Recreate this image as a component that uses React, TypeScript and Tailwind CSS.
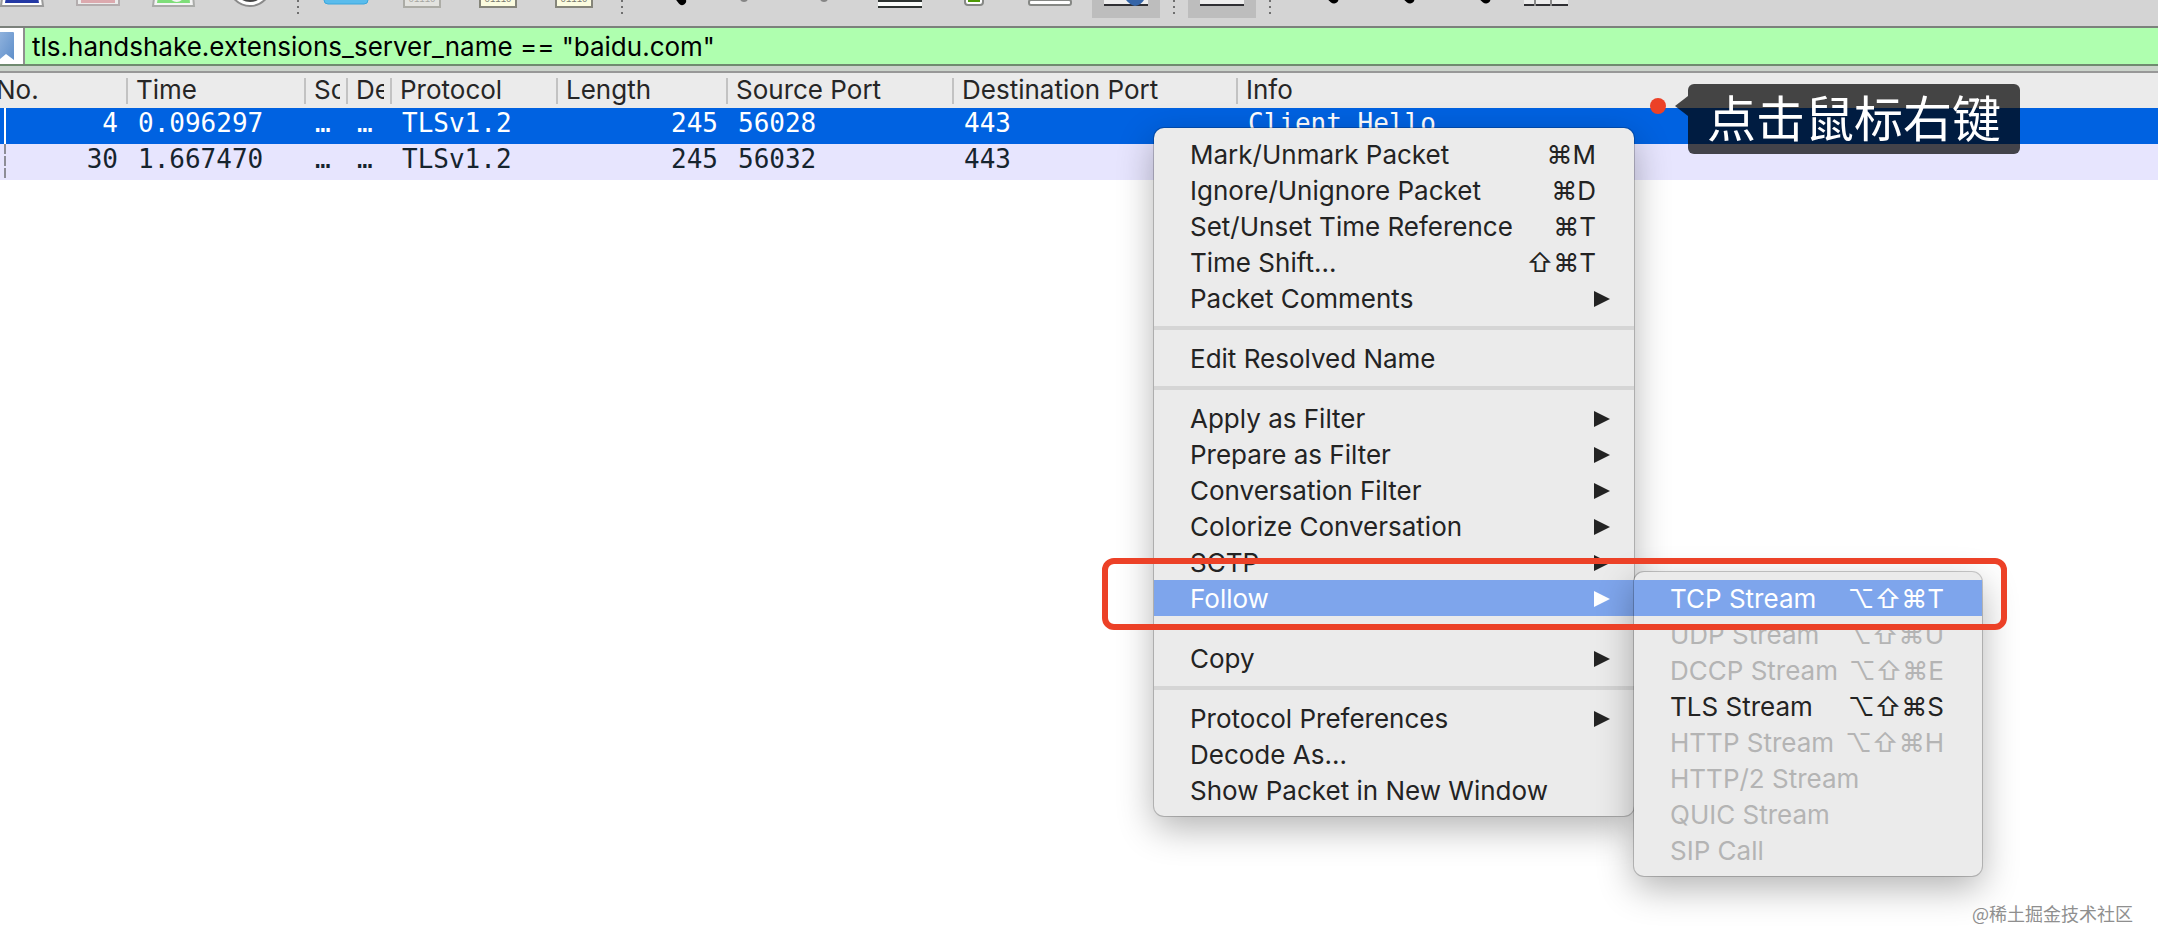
import React from 'react'

type MenuEntry = {
  label: string
  keys?: string
  sub?: boolean
  active?: boolean
  disabled?: boolean
}

const TOOLS = [
  "start", "stop", "restart", "options", "|",
  "open", "save", "close", "reload", "|",
  "find", "back", "forward", "goto", "first", "last", "autoscroll", "|",
  "colorize", "|",
  "zoom-in", "zoom-out", "zoom-reset", "resize",
]

const COLUMNS = [
  { label: "No.",              width: "w-[128px]" },
  { label: "Time",             width: "w-[178px]" },
  { label: "Source",           width: "w-[42px]"  },
  { label: "Destination",      width: "w-[44px]"  },
  { label: "Protocol",         width: "w-[166px]" },
  { label: "Length",           width: "w-[170px]" },
  { label: "Source Port",      width: "w-[226px]" },
  { label: "Destination Port", width: "w-[284px]" },
  { label: "Info",             width: ""          },
]

const PACKETS = [
  { no: 4,  time: "0.096297", protocol: "TLSv1.2", length: 245, srcPort: 56028, dstPort: 443, info: "Client Hello", selected: true  },
  { no: 30, time: "1.667470", protocol: "TLSv1.2", length: 245, srcPort: 56032, dstPort: 443, info: "Client Hello", selected: false },
]

const MENU: MenuEntry[][] = [
  [
    { label: "Mark/Unmark Packet", keys: "⌘M" },
    { label: "Ignore/Unignore Packet", keys: "⌘D" },
    { label: "Set/Unset Time Reference", keys: "⌘T" },
    { label: "Time Shift...", keys: "⇧⌘T" },
    { label: "Packet Comments", sub: true },
  ],
  [{ label: "Edit Resolved Name" }],
  [
    { label: "Apply as Filter", sub: true },
    { label: "Prepare as Filter", sub: true },
    { label: "Conversation Filter", sub: true },
    { label: "Colorize Conversation", sub: true },
    { label: "SCTP", sub: true },
    { label: "Follow", sub: true, active: true },
  ],
  [{ label: "Copy", sub: true }],
  [
    { label: "Protocol Preferences", sub: true },
    { label: "Decode As..." },
    { label: "Show Packet in New Window" },
  ],
]

const FOLLOW: MenuEntry[] = [
  { label: "TCP Stream", keys: "⌥⇧⌘T", active: true },
  { label: "UDP Stream", keys: "⌥⇧⌘U", disabled: true },
  { label: "DCCP Stream", keys: "⌥⇧⌘E", disabled: true },
  { label: "TLS Stream", keys: "⌥⇧⌘S" },
  { label: "HTTP Stream", keys: "⌥⇧⌘H", disabled: true },
  { label: "HTTP/2 Stream", disabled: true },
  { label: "QUIC Stream", disabled: true },
  { label: "SIP Call", disabled: true },
]

function DocIcon({ faded }: { faded?: boolean }) {
  return (
    <g opacity={faded ? 0.5 : 1}>
      <rect x="20" y="-40" width="36" height="47" fill={faded ? "#f2f2ea" : "#fcfcdf"} stroke="#85857a" strokeWidth="2" />
      <text x="38" y="2" textAnchor="middle" fontFamily="Liberation Mono" fontSize="9" fill="#77776f">01110</text>
    </g>
  )
}

function ToolIcon({ name }: { name: string }) {
  switch (name) {
    case "start":
      return <>
        <path d="M20-16 H56 L59 6 H17Z" fill="#fff" stroke="#9a9a9a" strokeWidth="2" />
        <path d="M24-16 H52 L55 3 H21Z" fill="#2439a5" />
      </>
    case "stop":
      return <>
        <rect x="17" y="-30" width="42" height="35" fill="#ececec" stroke="#b3adae" strokeWidth="2" />
        <rect x="21" y="-30" width="34" height="33" fill="#dca9ae" />
      </>
    case "restart":
      return <>
        <path d="M20-16 H56 L58 6 H17Z" fill="#f4f4f4" stroke="#a9aba8" strokeWidth="2" />
        <path d="M24-16 H52 L54 3 H21Z" fill="#7ede79" />
        <path d="M35-3 Q41 3 46-3" fill="none" stroke="#f4f4f4" strokeWidth="4" />
      </>
    case "options":
      return <>
        <circle cx="38" cy="-15" r="21" fill="#fff" stroke="#8a8a8a" strokeWidth="2" />
        <circle cx="38" cy="-14" r="16" fill="#444" />
      </>
    case "open":
      return <rect x="16" y="-20" width="44" height="24" rx="4" fill="#5abcec" stroke="#3ba6dc" />
    case "save":
      return <DocIcon faded />
    case "close":
    case "reload":
      return <DocIcon />
    case "find":
      return <path d="M43-8 L50 1" stroke="#000" strokeWidth="8" strokeLinecap="round" />
    case "back":
      return <circle cx="36" cy="-2" r="4" fill="#858585" />
    case "forward":
      return <circle cx="40" cy="-2" r="4" fill="#858585" />
    case "goto":
      return <>
        <rect x="18" y="0" width="44" height="8" fill="#2d3230" />
        <rect x="18" y="2" width="44" height="4" fill="#fafcfa" />
      </>
    case "first":
      return <>
        <rect x="29" y="-12" width="18" height="17" rx="3" fill="#fff" stroke="#868885" strokeWidth="2" />
        <rect x="32" y="-10" width="12" height="12" fill="#4e9a06" />
      </>
    case "last":
      return <rect x="17" y="0" width="42" height="5" rx="2" fill="#fff" stroke="#868885" strokeWidth="2" />
    case "autoscroll":
      return <>
        <rect x="16" y="0" width="44" height="4" fill="#eee" />
        <rect x="16" y="4" width="44" height="2" fill="#2f2f33" />
        <path d="M38 0 H56 Q53 5 47 6 Q42 5 38 0Z" fill="#3565a8" />
      </>
    case "colorize":
      return <>
        <rect x="16" y="0" width="44" height="4" fill="#eee" />
        <rect x="16" y="4" width="44" height="2" fill="#2f2f33" />
      </>
    case "resize":
      return <>
        <rect x="16" y="0" width="44" height="4" fill="#ececec" />
        <rect x="16" y="4" width="44" height="2" fill="#2f2f33" />
        <path d="M27 0 V6 M43 0 V6" stroke="#8a8a8a" strokeWidth="2" />
      </>
    default:
      return <path d="M46-8 L54-1" stroke="#000" strokeWidth="9" strokeLinecap="round" />
  }
}

function Toolbar() {
  return (
    <div className="flex items-start h-7 -ml-4 border-b-2 border-[#7b817b] bg-[#d4d4d4] overflow-hidden">
      {TOOLS.map((t, i) => {
        if (t === "|") {
          return (
            <svg key={i} className="w-5 h-4 shrink-0" viewBox="0 0 20 16" aria-hidden="true">
              <path d="M10 0V2M10 6V8M10 12V14" stroke="#6f6f6f" strokeWidth="2" />
            </svg>
          )
        }
        const pressed = t === "autoscroll" || t === "colorize"
        return (
          <button key={i} type="button" aria-label={t} className="w-[76px] h-[18px] px-1 shrink-0 flex justify-center">
            <span className={pressed ? "w-full h-full flex justify-center bg-[#bdbdbd]" : "w-full h-full flex justify-center"}>
              <svg className="w-[76px] h-[18px] shrink-0" viewBox="0 0 76 18"><ToolIcon name={t} /></svg>
            </span>
          </button>
        )
      })}
    </div>
  )
}

function FilterBar() {
  return (
    <div className="flex h-[38px] border-b-2 border-[#6f8a6f] bg-[#afffaf]">
      <button type="button" aria-label="Filter bookmarks" className="w-[25px] h-full shrink-0 bg-white border-r-2 border-[#8f8f8f]">
        <svg className="w-[14px] h-[28px]" viewBox="0 0 14 28">
          <defs>
            <linearGradient id="ribbon" x1="0" y1="0" x2="1" y2="1">
              <stop offset="0" stopColor="#8fb2dd" />
              <stop offset="1" stopColor="#5f8fca" />
            </linearGradient>
          </defs>
          <path d="M0 0 H13 Q14 0 14 1 V28 L6 22 L0 27Z" fill="url(#ribbon)" />
        </svg>
      </button>
      <input
        type="text"
        aria-label="Display filter"
        defaultValue={'tls.handshake.extensions_server_name == "baidu.com"'}
        className="flex-1 min-w-0 h-full pl-[7px] bg-transparent text-[26px] text-black outline-none"
      />
    </div>
  )
}

function PacketTable() {
  return (
    <table className="w-full table-fixed border-collapse">
      <thead>
        <tr className="h-[35px] bg-[#ebebeb] text-[#262626]">
          {COLUMNS.map((c, i) => (
            <th key={c.label} className={`${c.width} p-0 text-left font-normal`}>
              <div className={i < 8 ? "h-[26px] border-r-2 border-[#c2c2c2] pr-[6px]" : "h-[26px]"}>
                <div className={i === 0 ? "-ml-1 text-[26px] leading-6" : "pl-2 h-[30px] overflow-hidden whitespace-nowrap text-[26px] leading-6"}>
                  {c.label}
                </div>
              </div>
            </th>
          ))}
        </tr>
      </thead>
      <tbody className="font-['DejaVu_Sans_Mono',monospace] text-[26px] leading-[30px] align-top">
        {PACKETS.map((p) => (
          <tr key={p.no} className={p.selected ? "h-9 bg-[#0062e1] text-white" : "h-9 bg-[#e7e5fe] text-[#16242e]"}>
            <td className="p-0">
              <div className="h-9 flex justify-between pl-1 pr-[10px]">
                <svg className="w-[2px] h-9" viewBox="0 0 2 36" aria-hidden="true">
                  <path d="M1 0V36" strokeWidth="2" stroke={p.selected ? "#fff" : "#8d8d97"} strokeDasharray={p.selected ? undefined : "10 2"} />
                </svg>
                {p.no}
              </div>
            </td>
            <td className="py-0 pl-[10px] pr-0">{p.time}</td>
            <td className="py-0 pl-[9px] pr-0">…</td>
            <td className="py-0 pl-[9px] pr-0">…</td>
            <td className="py-0 pl-[10px] pr-0">{p.protocol}</td>
            <td className="py-0 pl-0 pr-[10px] text-right">{p.length}</td>
            <td className="py-0 pl-[10px] pr-0">{p.srcPort}</td>
            <td className="py-0 pl-[10px] pr-0">{p.dstPort}</td>
            <td className="py-0 pl-[10px] pr-0">{p.info}</td>
          </tr>
        ))}
      </tbody>
    </table>
  )
}

function MenuItem({ item }: { item: MenuEntry }) {
  const color = item.active ? "bg-[#7ea5ec] text-white" : item.disabled ? "text-[#b4b4b4]" : "text-[#232323]"
  return (
    <button
      type="button"
      role="menuitem"
      disabled={item.disabled}
      className={`w-full h-9 pt-0.5 pl-9 flex items-center justify-between text-[26px] leading-9 whitespace-nowrap ${item.sub ? "pr-6" : "pr-[38px]"} ${color}`}
    >
      <span>{item.label}</span>
      {item.keys && <span>{item.keys}</span>}
      {item.sub && (
        <svg className="w-4 h-4 shrink-0" viewBox="0 0 16 16" fill="currentColor"><path d="M0 0 L16 8 L0 16Z" /></svg>
      )}
    </button>
  )
}

const PANEL = "absolute py-2 rounded-[10px] bg-[#ebebeb] ring-1 ring-black/20 shadow-[0_12px_36px_rgba(0,0,0,0.3)]"

function ContextMenu() {
  return (
    <div role="menu" className={`${PANEL} left-[1154px] top-[128px] w-[480px]`}>
      {MENU.map((group, i) => (
        <div key={i}>
          {i > 0 && <div className="py-[10px]"><div className="h-1 bg-[#d5d5d5]" /></div>}
          {group.map((item) => (
            <div key={item.label} className="relative">
              <MenuItem item={item} />
              {item.label === "Follow" && (
                <div role="menu" className={`${PANEL} left-full -top-2 w-[348px]`}>
                  {FOLLOW.map((f) => <MenuItem key={f.label} item={f} />)}
                </div>
              )}
            </div>
          ))}
        </div>
      ))}
    </div>
  )
}

export default function App() {
  return (
    <div className="relative min-h-screen bg-white overflow-hidden font-[Inter,'Noto_Sans_CJK_SC',sans-serif]">
      <Toolbar />
      <FilterBar />
      <div className="h-[7px] bg-[#cbd3cb] border-b-2 border-[#989898]" />
      <PacketTable />

      <ContextMenu />

      <div className="absolute left-[1102px] top-[558px] w-[905px] h-[72px] border-[6px] border-[#ec4127] rounded-[12px]" />

      {/* callout */}
      <div className="absolute left-[1650px] top-[84px] flex items-start">
        <div className="w-4 h-4 mt-[14px] rounded-full bg-[#ec4127]" />
        <svg className="w-[13px] h-5 mt-3 ml-[9px]" viewBox="0 0 13 20"><path d="M13 0 V20 L0 10Z" fill="#000" fillOpacity="0.71" /></svg>
        <div className="h-[70px] px-[19px] rounded-[6px] bg-black/71 text-white text-[49px] leading-[64px] font-[Noto_Sans_CJK_SC,sans-serif]">
          点击鼠标右键
        </div>
      </div>

      <p className="absolute right-[25px] bottom-[25px] text-[18px] leading-6 text-[#8f8f8f] font-[Noto_Sans_CJK_SC,sans-serif]">
        @稀土掘金技术社区
      </p>
    </div>
  )
}
